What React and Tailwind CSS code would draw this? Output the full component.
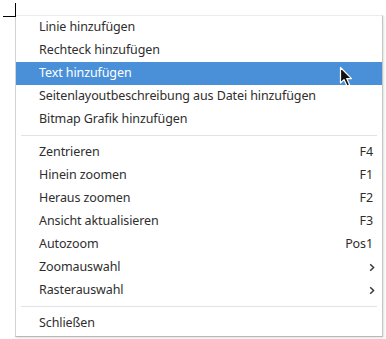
import React from 'react';

const groups = [
  [
    { label: 'Linie hinzufügen' },
    { label: 'Rechteck hinzufügen' },
    { label: 'Text hinzufügen', active: true },
    { label: 'Seitenlayoutbeschreibung aus Datei hinzufügen' },
    { label: 'Bitmap Grafik hinzufügen' },
  ],
  [
    { label: 'Zentrieren', shortcut: 'F4' },
    { label: 'Hinein zoomen', shortcut: 'F1' },
    { label: 'Heraus zoomen', shortcut: 'F2' },
    { label: 'Ansicht aktualisieren', shortcut: 'F3' },
    { label: 'Autozoom', shortcut: 'Pos1' },
    { label: 'Zoomauswahl', submenu: true },
    { label: 'Rasterauswahl', submenu: true },
  ],
  [{ label: 'Schließen' }],
];

const Chevron = () => (
  <svg width="6" height="9" viewBox="0 0 6 9" className="mr-[-2px]">
    <path d="M1.2 1.2 L4.6 4.5 L1.2 7.8" fill="none" stroke="#3a3a3a" strokeWidth="1.5" />
  </svg>
);

const Cursor = () => (
  <svg width="14" height="22" viewBox="0 0 14 22" className="absolute left-[339px] top-[66px]">
    <path
      d="M1.5 1.5 L1.5 17 L5 13.6 L8 20 L10.6 18.8 L7.7 12.6 L12.5 12.6 Z"
      fill="#111"
      stroke="#fff"
      strokeWidth="1.2"
      strokeLinejoin="round"
    />
  </svg>
);

const Item = ({ label, shortcut, submenu, active }) => (
  <div
    className={`flex items-center justify-between h-[23px] pl-[23px] pr-[9px] ${
      active ? 'bg-[#4a90d9] text-white' : 'text-[#2e2e2e]'
    }`}
  >
    <span>{label}</span>
    {shortcut && <span>{shortcut}</span>}
    {submenu && <Chevron />}
  </div>
);

export default function App() {
  return (
    <div className="relative w-[386px] h-[339px] bg-white font-['Noto_Sans',sans-serif] text-[12.5px] tracking-[-0.1px] leading-none">
      {/* corner mark */}
      <div className="absolute left-[3px] top-[16px] w-[13px] h-px bg-black" />
      <div className="absolute left-[15px] top-[3px] w-px h-[14px] bg-black" />

      <div className="ml-[15px] pt-[15px] w-[368px]">
        <div className="border border-t-[#ececec] border-l-[#d4d4d4] border-r-[#c4c4c4] border-b-[#b8b8b8] bg-white shadow-[1px_1px_2px_rgba(0,0,0,0.12)]">
          {groups.map((g, gi) => (
            <div key={gi}>
              {gi > 0 && (
                <div className="h-[10px] pt-[4px] px-[5px]">
                  <div className="h-px bg-[#e3e3e3]" />
                </div>
              )}
              {g.map((it) => (
                <Item key={it.label} {...it} />
              ))}
            </div>
          ))}
          <div className="h-px" />
        </div>
      </div>

      <Cursor />
    </div>
  );
}
